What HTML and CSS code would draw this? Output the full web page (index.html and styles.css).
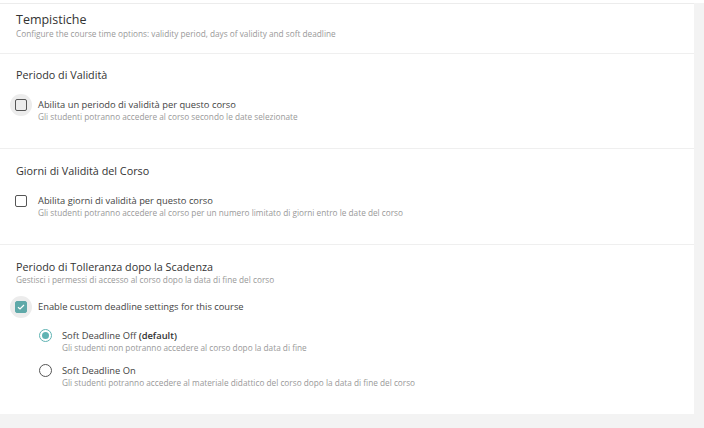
FILE: index.html
```html
<!DOCTYPE html>
<html>
<head>
<meta charset="utf-8">
<link rel="stylesheet" href="styles.css">
</head>
<body>
<div class="topstrip"></div>
<div class="page">
  <div class="card">
    <div class="section header">
      <div class="h-title">Tempistiche</div>
      <div class="h-sub">Configure the course time options: validity period, days of validity and soft deadline</div>
    </div>
    <div class="section s1">
      <div class="s-title">Periodo di Validità</div>
      <div class="option">
        <span class="ctrl halo"><span class="box"></span></span>
        <div class="opt-text">
          <div class="opt-label">Abilita un periodo di validità per questo corso</div>
          <div class="opt-desc">Gli studenti potranno accedere al corso secondo le date selezionate</div>
        </div>
      </div>
    </div>
    <div class="section s2">
      <div class="s-title">Giorni di Validità del Corso</div>
      <div class="option">
        <span class="ctrl"><span class="box"></span></span>
        <div class="opt-text">
          <div class="opt-label">Abilita giorni di validità per questo corso</div>
          <div class="opt-desc">Gli studenti potranno accedere al corso per un numero limitato di giorni entro le date del corso</div>
        </div>
      </div>
    </div>
    <div class="section s3">
      <div class="s-title">Periodo di Tolleranza dopo la Scadenza</div>
      <div class="s-sub">Gestisci i permessi di accesso al corso dopo la data di fine del corso</div>
      <div class="option check-opt">
        <span class="ctrl halo"><span class="box checked"><svg width="8" height="6" viewBox="0 0 8 6"><path d="M1 3.2 L3 5 L7 1" fill="none" stroke="#fff" stroke-width="1.2"/></svg></span></span>
        <div class="opt-text">
          <div class="opt-label">Enable custom deadline settings for this course</div>
        </div>
      </div>
      <div class="radios">
        <div class="option radio-opt">
          <span class="ctrl"><span class="radio on"><span class="dot"></span></span></span>
          <div class="opt-text">
            <div class="opt-label">Soft Deadline Off <b>(default)</b></div>
            <div class="opt-desc">Gli studenti non potranno accedere al corso dopo la data di fine</div>
          </div>
        </div>
        <div class="option radio-opt">
          <span class="ctrl"><span class="radio"></span></span>
          <div class="opt-text">
            <div class="opt-label">Soft Deadline On</div>
            <div class="opt-desc">Gli studenti potranno accedere al materiale didattico del corso dopo la data di fine del corso</div>
          </div>
        </div>
      </div>
    </div>
  </div>
</div>
</body>
</html>
```

FILE: styles.css
```css
* { box-sizing: border-box; }
html, body { margin: 0; padding: 0; }
body {
  background: #f3f3f3;
  font-family: "Open Sans", "Liberation Sans", sans-serif;
  color: #333;
  width: 704px;
  height: 428px;
  overflow: hidden;
}
.topstrip { height: 3px; background: #fff; }
.page { padding-right: 10px; }
.card {
  background: #fff;
  border-top: 1px solid #ececec;
  height: 411px;
}
.section {
  padding: 0 16px;
  border-bottom: 1px solid #efefef;
}
.section:last-child { border-bottom: none; }
.header { height: 50px; padding-top: 7px; }
.h-title { font-size: 12.5px; line-height: 17px; color: #333; }
.h-sub { font-size: 8.25px; line-height: 11px; color: #999; }
.s1 { height: 95px; padding-top: 14px; }
.s2 { height: 96px; padding-top: 15px; }
.s3 { padding-top: 15px; }
.s-title { font-size: 10.8px; line-height: 14px; color: #333; }
.s-sub { font-size: 8.25px; line-height: 11px; color: #999; }
.option { display: flex; align-items: flex-start; gap: 6px; }
.s1 .option { margin-top: 16px; }
.s2 .option { margin-top: 16px; }
.check-opt { margin-top: 15px; }
.ctrl {
  width: 22px; height: 22px; margin-left: -6px;
  display: flex; align-items: center; justify-content: center;
  border-radius: 50%; flex: none; margin-top: -4.5px;
}
.halo { background: #ececec; }
.box {
  width: 12px; height: 12px; border: 1.3px solid #555; border-radius: 2px;
  display: flex; align-items: center; justify-content: center;
}
.box.checked { background: #5fa9a9; border-color: #5fa9a9; }
.opt-label { font-size: 9.35px; line-height: 13px; color: #444; }
.opt-label b { font-weight: 600; color: #333; }
.opt-desc { font-size: 8.25px; line-height: 12px; color: #999; }
.radios { padding-left: 23px; margin-top: 11px; }
.radio-opt { margin-bottom: 10px; }
.radio-opt .ctrl { margin-left: -5px; }
.radio {
  width: 13px; height: 13px; border: 1.4px solid #555; border-radius: 50%;
  display: flex; align-items: center; justify-content: center;
}
.radio.on { border-color: #5fb3b3; }
.dot { width: 7px; height: 7px; border-radius: 50%; background: #5fb3b3; }
```
